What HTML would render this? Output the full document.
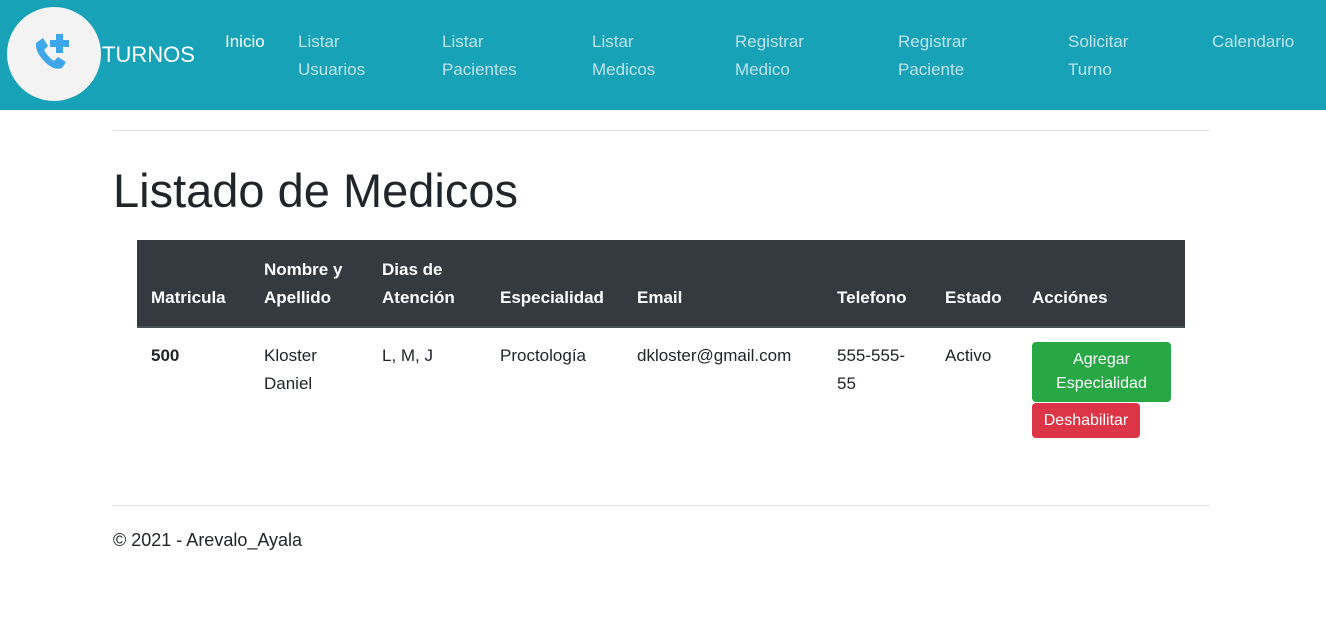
<!DOCTYPE html>
<html><head><meta charset="utf-8"><style>
*{margin:0;padding:0;box-sizing:border-box}
body{width:1326px;height:642px;background:#fff;font-family:"Liberation Sans",sans-serif;color:#212529;position:relative;overflow:hidden;font-size:16px}
.a{position:absolute;white-space:nowrap}
.hdr{position:absolute;left:0;top:0;width:1326px;height:110px;background:#17a2b8}
.nav{color:#bfe3ea;font-size:17px;line-height:28px}
.th{color:#fff;font-weight:bold;font-size:17px;line-height:28px}
.td{font-size:17px;line-height:28px}
</style></head><body>
<div class="hdr"></div>
<div class="a" style="left:7px;top:7px;width:94px;height:94px;border-radius:50%;background:#f3f3f3"></div>
<svg class="a" style="left:34px;top:33px" width="40" height="40" viewBox="0 0 40 40">
<path d="M2 10 L9 5 L14 13 L10 17 Q14 24 20 28 L24 24 L32 29 L28 35 Q20 38 11 29 Q1 19 2 10Z" fill="#3ea7ea"/>
<path d="M22 1 h7 v6 h6 v7 h-6 v6 h-7 v-6 h-6 v-7 h6z" fill="#3ea7ea"/>
</svg>
<div class="a" style="left:102px;top:41px;color:#fff;font-size:22px;line-height:28px">TURNOS</div>
<div class="a nav" style="left:225px;top:28px;color:#fff">Inicio</div>
<div class="a nav" style="left:298px;top:28px">Listar<br>Usuarios</div>
<div class="a nav" style="left:442px;top:28px">Listar<br>Pacientes</div>
<div class="a nav" style="left:592px;top:28px">Listar<br>Medicos</div>
<div class="a nav" style="left:735px;top:28px">Registrar<br>Medico</div>
<div class="a nav" style="left:898px;top:28px">Registrar<br>Paciente</div>
<div class="a nav" style="left:1068px;top:28px">Solicitar<br>Turno</div>
<div class="a nav" style="left:1212px;top:28px">Calendario</div>
<div class="a" style="left:113px;top:130px;width:1097px;border-top:1px solid #e1e1e1"></div>
<div class="a" style="left:113px;top:163px;font-size:47px;line-height:56px;font-weight:500">Listado de Medicos</div>
<div class="a" style="left:137px;top:240px;width:1048px;height:88px;background:#343a40;border-bottom:2px solid #454d55"></div>
<div class="a th" style="left:151px;top:284px">Matricula</div>
<div class="a th" style="left:264px;top:256px">Nombre y<br>Apellido</div>
<div class="a th" style="left:382px;top:256px">Dias de<br>Atención</div>
<div class="a th" style="left:500px;top:284px">Especialidad</div>
<div class="a th" style="left:637px;top:284px">Email</div>
<div class="a th" style="left:837px;top:284px">Telefono</div>
<div class="a th" style="left:945px;top:284px">Estado</div>
<div class="a th" style="left:1032px;top:284px">Acciónes</div>
<div class="a td" style="left:151px;top:342px;font-weight:bold">500</div>
<div class="a td" style="left:264px;top:342px">Kloster<br>Daniel</div>
<div class="a td" style="left:382px;top:342px">L, M, J</div>
<div class="a td" style="left:500px;top:342px">Proctología</div>
<div class="a td" style="left:637px;top:342px">dkloster@gmail.com</div>
<div class="a td" style="left:837px;top:342px">555-555-<br>55</div>
<div class="a td" style="left:945px;top:342px">Activo</div>
<div class="a" style="left:1032px;top:342px;width:139px;height:60px;background:#28a745;border-radius:4px;color:#fff;text-align:center;font-size:16px;line-height:24px;padding-top:6px">Agregar<br>Especialidad</div>
<div class="a" style="left:1032px;top:403px;width:108px;height:35px;background:#dc3545;border-radius:4px;color:#fff;text-align:center;font-size:16px;line-height:35px">Deshabilitar</div>
<div class="a" style="left:113px;top:505px;width:1097px;border-top:1px solid #e1e1e1"></div>
<div class="a" style="left:113px;top:528px;font-size:18px;line-height:24px">© 2021 - Arevalo_Ayala</div>
</body></html>
